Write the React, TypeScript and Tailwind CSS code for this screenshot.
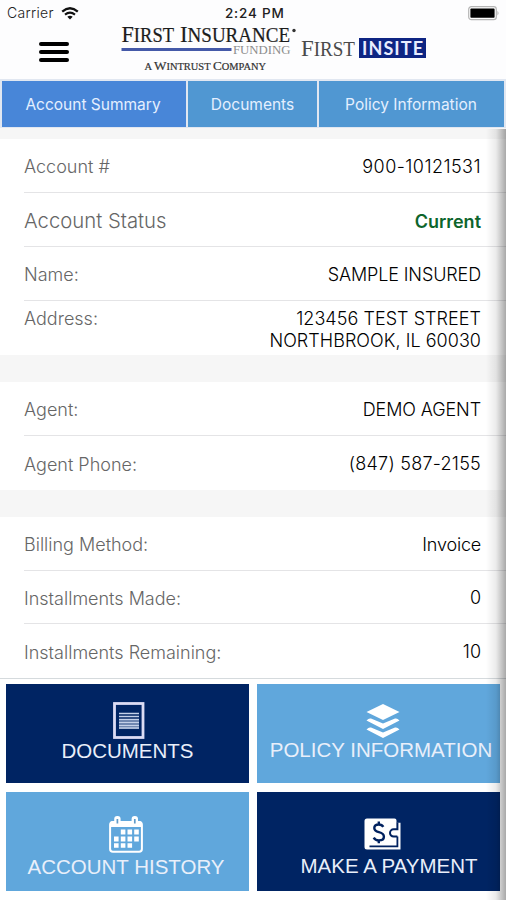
import React from "react";

type RowProps = {
  label: string;
  value: React.ReactNode;
  height: string;
  labelClass?: string;
  valueClass?: string;
  last?: boolean;
};

function Row({
  label,
  value,
  height,
  labelClass = "text-[18px]",
  valueClass = "font-light text-black",
  last = false,
}: RowProps) {
  return (
    <div className={`ml-6 flex items-center justify-between pr-[25px] pt-[2px] ${height} ${last ? "" : "border-b border-[#e4e4e6]"}`}>
      <span className={`whitespace-nowrap font-light text-[#666666] ${labelClass}`}>{label}</span>
      <span className={`whitespace-nowrap text-right text-[18px] leading-[22px] ${valueClass}`}>{value}</span>
    </div>
  );
}

function WifiIcon() {
  return (
    <svg className="ml-[7px] h-[13px] w-[18px]" viewBox="0 0 18 13" fill="none" stroke="#111">
      <path d="M1.2 4.6 Q9 -2 16.8 4.6" strokeWidth="2.3" />
      <path d="M4 7.6 Q9 3.6 14 7.6" strokeWidth="2.1" />
      <path d="M6.3 9.8 Q9 7.5 11.7 9.8 L9 12.4 Z" fill="#111" stroke="none" />
    </svg>
  );
}

function Logo() {
  return (
    <svg className="block h-[52px] w-[310px]" viewBox="120 22 310 52" fontFamily="'Liberation Serif', 'Times New Roman', serif">
      <text x="121.5" y="42.3" fontSize="24" fill="#1c1c1c" stroke="#1c1c1c" strokeWidth="0.2" textLength="52.5" lengthAdjust="spacingAndGlyphs">F<tspan fontSize="20">IRST</tspan></text>
      <text x="180" y="42.3" fontSize="24" fill="#1c1c1c" stroke="#1c1c1c" strokeWidth="0.2" textLength="110" lengthAdjust="spacingAndGlyphs">I<tspan fontSize="20">NSURANCE</tspan></text>
      <circle cx="294" cy="30.5" r="1.7" fill="#333" />
      <rect x="121.5" y="48" width="110" height="3" fill="#4459a8" />
      <text x="233" y="54.3" fontSize="13" fill="#8c8c8c" textLength="57.5" lengthAdjust="spacingAndGlyphs">FUNDING</text>
      <text x="144.5" y="69.5" fontSize="9.5" fill="#333" stroke="#333" strokeWidth="0.2" textLength="121.5" lengthAdjust="spacingAndGlyphs">A <tspan fontSize="12">W</tspan>INTRUST <tspan fontSize="12">C</tspan>OMPANY</text>
      <text x="301" y="56" fontSize="24" fill="#4a4a4a" textLength="54" lengthAdjust="spacingAndGlyphs">F<tspan fontSize="20">IRST</tspan></text>
      <rect x="359" y="38" width="67" height="20" fill="#0e2583" />
      <text x="362" y="54.5" fontSize="18" fontWeight="700" fontFamily="Lato, sans-serif" fill="#e9edff" textLength="61" lengthAdjust="spacing">INSITE</text>
    </svg>
  );
}

function DocumentIcon() {
  return (
    <svg className="h-[37px] w-[32px]" viewBox="0 0 32 37">
      <rect x="1.5" y="1.5" width="28.5" height="34" fill="none" stroke="#dcdcf4" strokeWidth="2.8" />
      <path d="M6 17h20v10H6z" fill="#8fa3c8" opacity=".6" />
      <path d="M6 11.5h20M6 14.5h20M6 17.5h20M6 20.5h20M6 23.5h20M6 26h20" stroke="#c4d0e8" strokeWidth="1.4" />
    </svg>
  );
}

function LayersIcon() {
  return (
    <svg className="h-[34px] w-[34px]" viewBox="0 0 34 34" fill="#fff">
      <path d="M17 0 33.5 8 17 16 .5 8Z" />
      <path d="M.5 16.5Q3 13.8 5 14.6L17 19.6 29 14.6Q31 13.8 33.5 16.5L17 25Z" />
      <path d="M.5 25.5Q3 22.8 5 23.6L17 28.6 29 23.6Q31 22.8 33.5 25.5L17 34Z" />
    </svg>
  );
}

function CalendarIcon() {
  return (
    <svg className="h-[37px] w-[34px]" viewBox="0 0 34 37">
      <rect x="1.1" y="6" width="31.8" height="29.8" rx="2.8" fill="none" stroke="#fff" strokeWidth="2" />
      <path d="M1 11V8q0-3 3-3h26q3 0 3 3v3H1z" fill="#fff" />
      <rect x="5.2" y="0" width="6.4" height="10" rx="3" fill="#fff" />
      <rect x="22.6" y="0" width="6.4" height="10" rx="3" fill="#fff" />
      <path d="M8.4 3v4.5M25.8 3v4.5" stroke="#609bc9" strokeWidth="1.7" />
      <path
        fill="#fff"
        d="M11.8 13.5h4.6v5h-4.6zM18.5 13.5h4.6v5h-4.6zM25.2 13.5h4.6v5h-4.6zM5 20.4h4.6v5H5zM11.8 20.4h4.6v5h-4.6zM18.5 20.4h4.6v5h-4.6zM25.2 20.4h4.6v5h-4.6zM5 27.2h4.6v4.6H5zM11.8 27.2h4.6v4.6h-4.6zM18.5 27.2h4.6v4.6h-4.6z"
      />
    </svg>
  );
}

function WalletIcon() {
  return (
    <svg className="h-[32px] w-[37px]" viewBox="0 0 37 32">
      <path d="M3 .5H30.5Q32.5.5 32.5 2.5V4.8H36.5V31.5H3Q.5 31.5.5 29V3Q.5.5 3 .5Z" fill="#fff" />
      <path d="M5.5 28.3H33.4V18.6" fill="none" stroke="#00215f" strokeWidth="1.8" />
      <path d="M33.4 4.5V11.3H29.6a3.6 3.6 0 0 0 0 7.2H33.4" fill="none" stroke="#00215f" strokeWidth="2" />
      <path d="M19.3 8.9Q18 6.5 14.8 6.5q-4.5 0-4.5 3.6 0 3 4.6 4.1 5 1.2 5 4.5 0 3.7-5 3.7-3.6 0-5.2-2.8M14.8 3.5v3M14.8 22v3.2" fill="none" stroke="#00215f" strokeWidth="2.4" />
    </svg>
  );
}

export default function App() {
  return (
    <div className="relative flex h-[900px] w-[506px] flex-col overflow-hidden bg-white font-['Inter','Liberation_Sans',sans-serif]">
      <header className="h-[79px] shrink-0 bg-[#fdfdfe]">
        <div className="grid h-[21px] grid-cols-[1fr_62px_1fr] items-end px-[7px] leading-4 text-[#222]">
          <div className="flex items-center pt-px">
            <span className="text-[14px] font-light tracking-[0.3px]">Carrier</span>
            <WifiIcon />
          </div>
          <span className="ml-[3px] whitespace-nowrap text-[13.5px] font-medium tracking-[0.8px]">2:24 PM</span>
          <svg className="-mr-px h-[15px] w-[32px] justify-self-end" viewBox="0 0 32 15">
            <rect x=".7" y=".7" width="27.6" height="13" rx="2.6" fill="#fff" stroke="#b5b5b5" strokeWidth="1.2" />
            <rect x="2.4" y="2.6" width="24.2" height="9.2" rx=".8" fill="#000" />
            <path d="M29.5 4.8q2 2.4 0 4.8z" fill="#aaa" />
          </svg>
        </div>
        <div className="flex h-[58px] items-start pt-px">
          <div className="ml-[39px] mt-5 flex w-[30px] flex-col gap-[4px]">
            <span className="h-[4px] rounded-full bg-black" />
            <span className="h-[4px] rounded-full bg-black" />
            <span className="h-[4px] rounded-full bg-black" />
          </div>
          <div className="ml-[51px]">
            <Logo />
          </div>
        </div>
      </header>

      <nav className="flex h-[49px] shrink-0 gap-[2px] bg-[#e1e7f1] px-[2px] pb-px pt-[2px] text-[15.5px] text-[#e4efff]">
        <div className="flex w-[184px] items-center justify-center bg-[#4886d8] pr-[2px] pt-[2px]">Account Summary</div>
        <div className="flex w-[129px] items-center justify-center bg-[#5097d2] pt-[2px]">Documents</div>
        <div className="flex w-[185px] items-center justify-center bg-[#5097d2] pr-px pt-[2px]">Policy Information</div>
      </nav>

      <main className="flex h-[550px] shrink-0 flex-col bg-[#f6f6f6] pt-[11px]">
        <section className="bg-white">
          <Row label="Account #" value="900-10121531" height="h-[54px]" valueClass="font-light text-black tracking-[0.45px]" />
          <Row
            label="Account Status"
            value="Current"
            height="h-[54px]"
            labelClass="text-[20.3px] pt-[2px]"
            valueClass="font-semibold text-[#0d652c] pt-[2px]"
          />
          <Row label="Name:" value="SAMPLE INSURED" height="h-[54px]" valueClass="font-light text-black tracking-[-0.12px]" />
          <div className="flex h-[54px] justify-between pl-6 pr-[25px] pt-[7px] text-[18px] font-light leading-[22px]">
            <span className="text-[#666666]">Address:</span>
            <span className="text-right tracking-[0.04px] text-black">
              123456 TEST STREET
              <br />
              NORTHBROOK, IL 60030
            </span>
          </div>
        </section>
        <section className="mt-[27px] bg-white">
          <Row label="Agent:" value="DEMO AGENT" height="h-[54px]" valueClass="font-light text-black tracking-[-0.12px]" />
          <Row label="Agent Phone:" value="(847) 587-2155" height="h-[54px]" valueClass="font-light text-black tracking-[0.25px]" last />
        </section>
        <section className="mt-[27px] grow bg-white">
          <Row label="Billing Method:" value="Invoice" height="h-[54px]" valueClass="font-light text-black tracking-[-0.2px]" />
          <Row label="Installments Made:" value="0" height="h-[53px]" />
          <Row label="Installments Remaining:" value="10" height="h-[54px]" last />
        </section>
      </main>

      <div className="grid grow grid-cols-[243px_243px] grid-rows-[99px_99px] gap-x-2 gap-y-[9px] border-t border-[#d5dadd] pl-[6px] pt-[5px] font-['Liberation_Sans',sans-serif] text-[20.5px] leading-[22px] text-[#e9effa]">
        <div className="flex flex-col items-center bg-[#002463] pt-[18px]">
          <span className="ml-[2px]">
            <DocumentIcon />
          </span>
          <span className="mt-[1px]">DOCUMENTS</span>
        </div>
        <div className="flex flex-col items-center bg-[#60a7dc] pt-[20px]">
          <span className="ml-[9px]">
            <LayersIcon />
          </span>
          <span className="ml-[5px] mt-px whitespace-nowrap">POLICY INFORMATION</span>
        </div>
        <div className="flex flex-col items-center bg-[#60a7dc] pt-[24px]">
          <span className="mr-[3px]">
            <CalendarIcon />
          </span>
          <span className="mr-[3px] mt-[3px]">ACCOUNT HISTORY</span>
        </div>
        <div className="flex flex-col items-center bg-[#002463] pt-[26px]">
          <span className="ml-[8px]">
            <WalletIcon />
          </span>
          <span className="ml-[21px] mt-[5px]">MAKE A PAYMENT</span>
        </div>
      </div>

      <div className="pointer-events-none absolute bottom-0 right-0 top-[129px] w-[20px] bg-linear-to-r from-black/0 via-black/8 to-black/34" />
    </div>
  );
}
